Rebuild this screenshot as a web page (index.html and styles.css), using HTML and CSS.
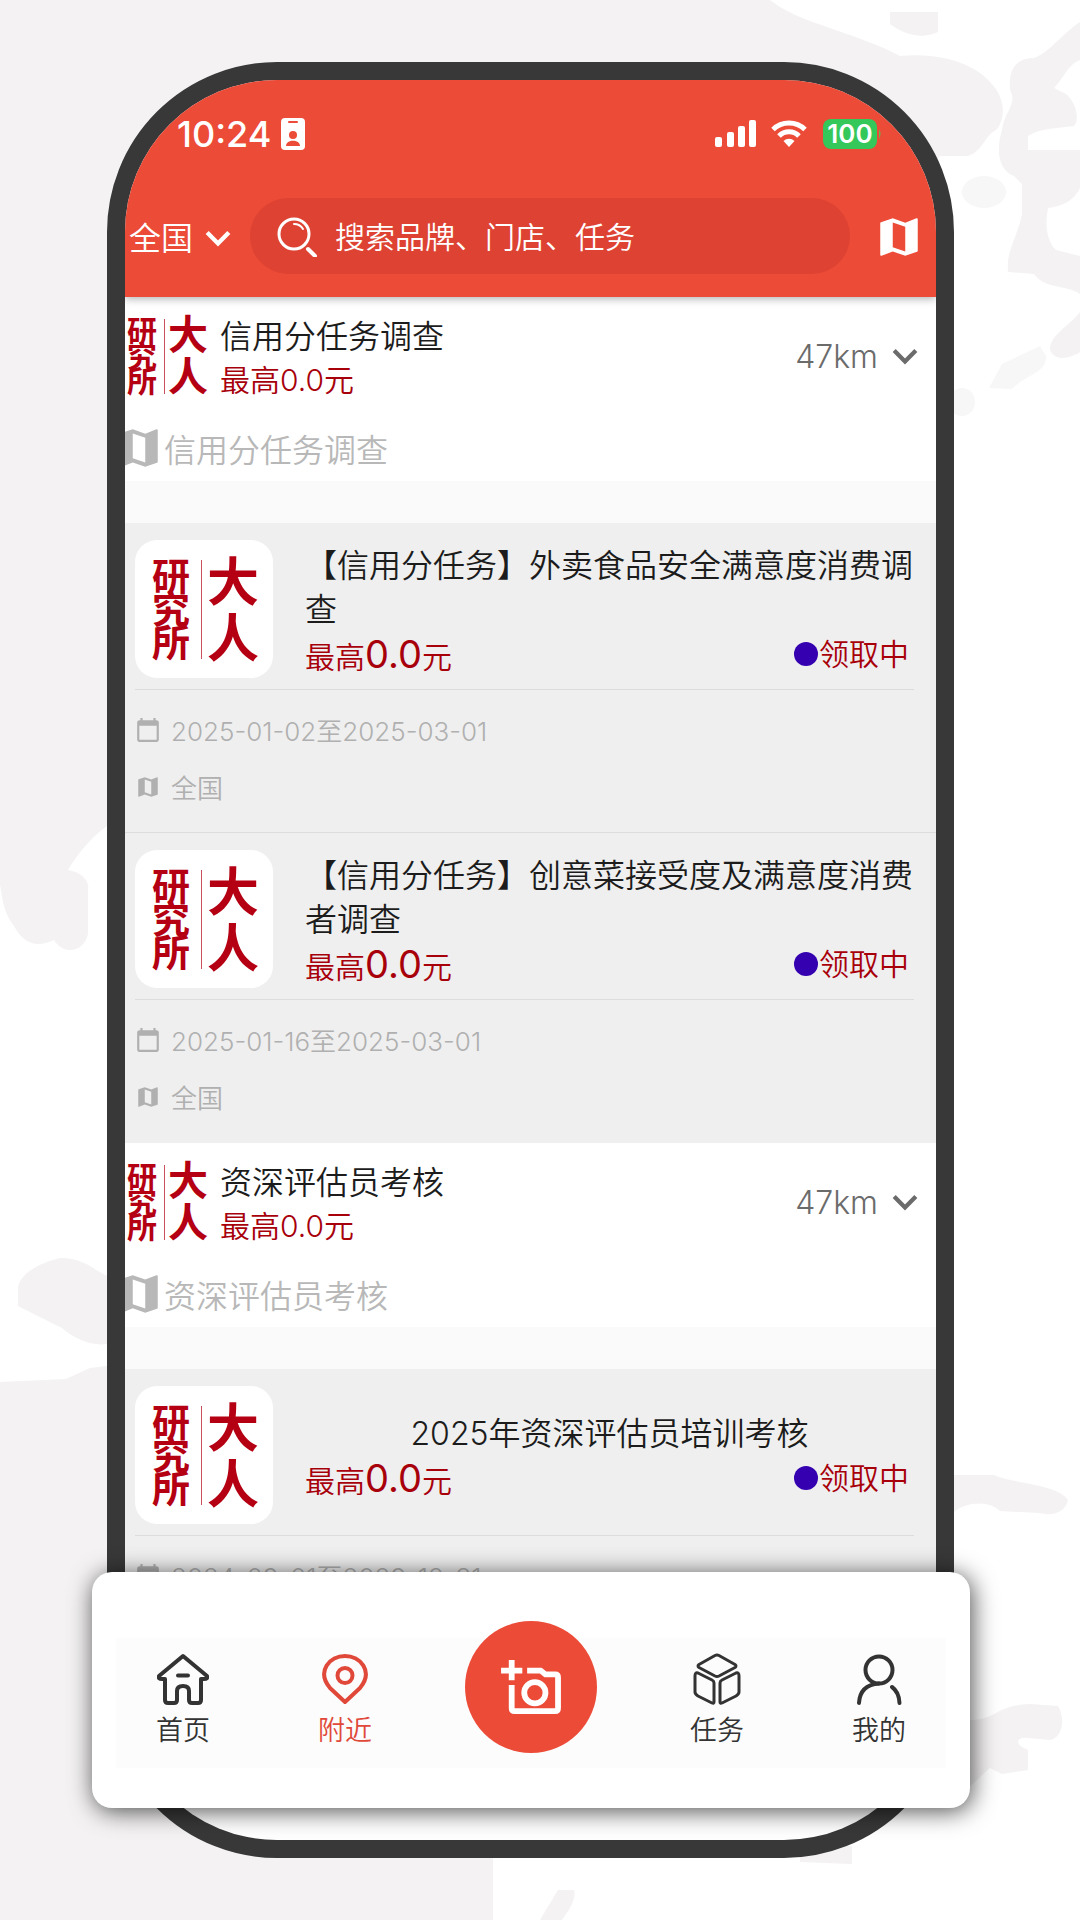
FILE: index.html
```
<!DOCTYPE html>
<html lang="zh-CN">

<head>
    <meta charset="UTF-8">
    <meta name="viewport" content="width=device-width, initial-scale=1.0">
    <title>附近任务</title>
    <link rel="stylesheet" href="styles.css">
</head>

<body>
<!-- shared icons -->
<svg class="sprite" aria-hidden="true">
    <symbol id="icon-map" viewBox="0 0 24 24">
        <path fill="currentColor" d="M20.500 3l-.16.030L15 5.100 9 3 3.360 4.900c-.210.070-.360.250-.360.480V20.500c0 .280.220.500.500.500l.160-.030L9 18.900l6 2.100 5.640-1.900c.210-.070.360-.250.360-.480V3.500c0-.280-.220-.500-.500-.500zM15 19l-6-2.110V5l6 2.110V19z"/>
    </symbol>
    <symbol id="icon-calendar" viewBox="0 0 24 24">
        <path fill="currentColor" d="M20 3h-1V1h-2v2H7V1H5v2H4c-1.100 0-2 .900-2 2v16c0 1.100.900 2 2 2h16c1.100 0 2-.900 2-2V5c0-1.100-.900-2-2-2zm0 18H4V8h16v13z"/>
    </symbol>
    <symbol id="icon-down" viewBox="0 0 24 24">
        <path fill="none" stroke="currentColor" stroke-width="4" d="M2 7l10 10L22 7"/>
    </symbol>
</svg>

<div class="stage">
    <svg class="backdrop" viewBox="0 0 1080 1920" preserveAspectRatio="none" aria-hidden="true">
        <path d="M0 0H770C800 24 850 30 900 56C940 52 975 64 990 82C1008 100 1004 122 996 130C984 136 984 150 968 156H940L600 600H107V826C92 836 76 856 68 870C80 872 90 880 88 890V934C84 952 64 956 54 940C36 948 24 944 14 926C4 914 2 898 0 884Z"/>
        <path d="M890 12H938V32C920 40 904 34 890 24Z"/>
        <path d="M1080 22C1062 34 1050 52 1034 58C1016 58 1008 70 1010 90C1018 104 1004 112 1002 130C996 150 998 170 1014 176L1022 184V214C1018 236 1006 250 1008 272L1034 274C1046 290 1066 284 1080 294V256L1056 250C1044 238 1046 218 1048 208C1064 206 1074 200 1080 188V150H1028V136C1040 128 1060 128 1074 126C1080 120 1076 102 1066 94L1054 88C1064 78 1068 64 1080 60Z"/>
        <path d="M1080 312C1070 326 1050 334 1050 350C1056 364 1074 356 1080 352Z"/>
        <g class="faint">
            <path d="M1040 346L1002 364L989 388L1012 389C1024 376 1048 372 1046 356Z"/>
            <ellipse cx="984" cy="192" rx="22" ry="16"/>
            <ellipse cx="962" cy="402" rx="13" ry="14"/>
        </g>
        <path d="M18 1290C18 1272 44 1262 60 1258C84 1258 94 1270 107 1276V1344C92 1346 76 1340 62 1328L18 1306Z"/>
        <path d="M0 1382L66 1379L90 1368L140 1362L493 1858V1920H0Z"/>
        <path d="M954 1475H994C1014 1484 1058 1484 1068 1500C1066 1514 1048 1516 1040 1513L1000 1511C988 1500 966 1502 954 1512Z"/>
        <path d="M960 1720C1000 1722 990 1706 1030 1704L1058 1706C1066 1720 1062 1738 1050 1740L1028 1738C1018 1736 1012 1744 1028 1750V1770L1002 1774L990 1768C976 1780 970 1790 960 1790Z"/>
        <path d="M800 1846H852V1864L800 1862Z"/>
        <path d="M558 1890H574C576 1896 572 1906 566 1914L562 1920H540Z"/>
    </svg>

    <div class="phone">
        <div class="screen">
            <header class="top">
                <div class="status">
                    <span class="clock">10:24</span>
                    <svg class="badge" viewBox="0 0 24 32" aria-hidden="true">
                        <rect width="24" height="32" rx="4" fill="#fff"/>
                        <rect x="7" y="3" width="10" height="2" rx="1" fill="#ec4b37"/>
                        <circle cx="12" cy="17" r="4" fill="#ec4b37"/>
                        <path d="M5 28c0-7 14-7 14 0z" fill="#ec4b37"/>
                    </svg>
                    <svg class="signal" viewBox="0 0 42 28" aria-hidden="true">
                        <g fill="#fff">
                            <rect x="0" y="17" width="7" height="10" rx="2"/>
                            <rect x="12" y="12" width="7" height="15" rx="2"/>
                            <rect x="23" y="6" width="7" height="21" rx="2"/>
                            <rect x="34" y="0" width="7" height="27" rx="2"/>
                        </g>
                    </svg>
                    <svg class="wifi" viewBox="0 0 36 28" aria-hidden="true">
                        <g fill="none" stroke="#fff" stroke-width="5">
                            <path d="M2 9.500a23 23 0 0 1 32 0"/>
                            <path d="M8 16a14 14 0 0 1 20 0"/>
                        </g>
                        <path fill="#fff" d="M18 27l-5.500-6a8 8 0 0 1 11 0z"/>
                    </svg>
                    <span class="battery">100</span>
                    <svg class="battery-tip" viewBox="0 0 5 12" aria-hidden="true"><path fill="#6fae4a" d="M2 1q3 5 0 10z"/></svg>
                </div>
                <form class="search-row" role="search">
                    <label class="city">
                        <select class="city-select" aria-label="地区">
                            <option>全国</option>
                        </select>
                        <svg class="icon-small"><use href="#icon-down"/></svg>
                    </label>
                    <label class="search">
                        <svg class="icon-search" viewBox="0 0 40 40" fill="none" stroke="#fff" stroke-linecap="round" aria-hidden="true">
                            <circle cx="17" cy="17" r="15" stroke-width="3"/>
                            <path d="M17 7q6 0 9 5" stroke-width="2"/>
                            <path d="M31 32l7 7" stroke-width="4"/>
                        </svg>
                        <input class="search-input" type="search" placeholder="搜索品牌、门店、任务" aria-label="搜索">
                    </label>
                    <button class="map-btn" type="button" aria-label="地图">
                        <svg class="icon-large"><use href="#icon-map"/></svg>
                    </button>
                </form>
            </header>

            <main>
                <section class="group">
                    <div class="group-head">
                        <div class="logo logo-small"><span class="logo-left">研究所</span><span class="logo-right">大人</span></div>
                        <div class="group-text">
                            <h2 class="title">信用分任务调查</h2>
                            <p class="price">最高0.0元</p>
                        </div>
                        <button class="distance" type="button">47km <svg class="icon-small"><use href="#icon-down"/></svg></button>
                    </div>
                    <p class="address"><svg class="icon-large"><use href="#icon-map"/></svg>信用分任务调查</p>
                    <ul class="tasks">
                        <li class="task">
                            <div class="task-main">
                                <div class="logo logo-card"><span class="logo-left">研究所</span><span class="logo-right">大人</span></div>
                                <div class="task-text">
                                    <h3 class="title">【信用分任务】外卖食品安全满意度消费调查</h3>
                                    <div class="task-row">
                                        <p class="price">最高<span class="amount">0.0</span>元</p>
                                        <p class="state">领取中</p>
                                    </div>
                                </div>
                            </div>
                            <p class="meta"><svg class="icon-meta"><use href="#icon-calendar"/></svg>2025-01-02至2025-03-01</p>
                            <p class="meta"><svg class="icon-meta"><use href="#icon-map"/></svg>全国</p>
                        </li>
                        <li class="task">
                            <div class="task-main">
                                <div class="logo logo-card"><span class="logo-left">研究所</span><span class="logo-right">大人</span></div>
                                <div class="task-text">
                                    <h3 class="title">【信用分任务】创意菜接受度及满意度消费者调查</h3>
                                    <div class="task-row">
                                        <p class="price">最高<span class="amount">0.0</span>元</p>
                                        <p class="state">领取中</p>
                                    </div>
                                </div>
                            </div>
                            <p class="meta"><svg class="icon-meta"><use href="#icon-calendar"/></svg>2025-01-16至2025-03-01</p>
                            <p class="meta"><svg class="icon-meta"><use href="#icon-map"/></svg>全国</p>
                        </li>
                    </ul>
                </section>

                <section class="group">
                    <div class="group-head">
                        <div class="logo logo-small"><span class="logo-left">研究所</span><span class="logo-right">大人</span></div>
                        <div class="group-text">
                            <h2 class="title">资深评估员考核</h2>
                            <p class="price">最高0.0元</p>
                        </div>
                        <button class="distance" type="button">47km <svg class="icon-small"><use href="#icon-down"/></svg></button>
                    </div>
                    <p class="address"><svg class="icon-large"><use href="#icon-map"/></svg>资深评估员考核</p>
                    <ul class="tasks">
                        <li class="task">
                            <div class="task-main">
                                <div class="logo logo-card"><span class="logo-left">研究所</span><span class="logo-right">大人</span></div>
                                <div class="task-text">
                                    <h3 class="title">2025年资深评估员培训考核</h3>
                                    <div class="task-row">
                                        <p class="price">最高<span class="amount">0.0</span>元</p>
                                        <p class="state">领取中</p>
                                    </div>
                                </div>
                            </div>
                            <p class="meta"><svg class="icon-meta"><use href="#icon-calendar"/></svg>2024-09-01至2029-12-31</p>
                        </li>
                    </ul>
                </section>
            </main>
        </div>

        <nav class="tabbar">
            <a class="tab" href="#home">
                <svg class="tab-icon" viewBox="0 0 52 52" aria-hidden="true">
                    <path d="M26 3L2 23q-1 3 3 3h3v21q0 3 3 3h6q3 0 3-3V38q0-5 6-5t6 5v9q0 3 3 3h6q3 0 3-3V26h3q4 0 3-3zM21 22.500h10"/>
                </svg>
                首页
            </a>
            <a class="tab tab-active" href="#nearby">
                <svg class="tab-icon" viewBox="0 0 52 52" aria-hidden="true">
                    <path d="M26 49L11 35C-3 18 11 3 26 3s29 15 15 32z"/>
                    <circle cx="26" cy="22.500" r="7.500"/>
                </svg>
                附近
            </a>
            <button class="shoot" type="button" aria-label="拍照">
                <svg class="shoot-icon" viewBox="0 0 62 58" fill="none" stroke="#fff" stroke-width="6" aria-hidden="true">
                    <path d="M0 12h22M11 1v21M11 27v24q0 3 3 3h42q3 0 3-3V19q0-3-3-3H46l-5-4H27"/>
                    <circle cx="35" cy="35" r="11"/>
                </svg>
            </button>
            <a class="tab" href="#tasks">
                <svg class="tab-icon tab-icon-thin" viewBox="0 0 52 52" aria-hidden="true">
                    <path d="M24 2.500q2-1 4 0l16 9q2 1.500 0 3L28 23q-2 1-4 0L8 14.500q-2-1.500 0-3zM4 23q0-4 3-3l14 7q2 1 2 3v19q0 2-2 1L7 43q-3-2-3-4zM48 23q0-4-3-3l-14 7q-2 1-2 3v19q0 2 2 1l14-7q3-2 3-4z"/>
                </svg>
                任务
            </a>
            <a class="tab" href="#mine">
                <svg class="tab-icon" viewBox="0 0 52 52" aria-hidden="true">
                    <circle cx="26" cy="17" r="13.500"/>
                    <path d="M6 50q1-18 20-19.500M39 34q7 5 7.500 16"/>
                </svg>
                我的
            </a>
        </nav>
    </div>
</div>
</body>

</html>
```
FILE: styles.css
```
* {
    box-sizing: border-box;
    margin: 0;
    padding: 0;
}

body {
    font-family: Inter, "Noto Sans CJK SC", sans-serif;
    font-weight: 350;
    background: #fff;
    color: #1c1c1c;
}

button,
input,
select {
    font: inherit;
    color: inherit;
    border: none;
    background: none;
}

ul {
    list-style: none;
}

.sprite {
    display: none;
}

.stage {
    position: relative;
    display: flex;
    min-height: 100vh;
    padding: 62px 126px 62px 107px;
}

.backdrop {
    position: absolute;
    top: 0;
    left: 0;
    width: 100%;
    height: 100%;
    fill: #f4f2f3;
}

.faint {
    fill: #f8f7f8;
}

.phone {
    position: relative;
    flex: 1;
    display: flex;
    border: 18px solid #383839;
    border-radius: 170px;
    background: #383839;
}

.screen {
    flex: 1;
    min-width: 0;
    overflow: hidden;
    border-radius: 152px;
    background: #fff;
}

/* header */
.top {
    position: relative;
    background: #ec4b37;
    color: #fff;
    box-shadow: 0 2px 8px rgba(0, 0, 0, 0.3);
}

.status {
    display: flex;
    align-items: center;
    height: 108px;
    padding: 0 54px 0 52px;
}

.clock {
    margin-right: 10px;
    font-size: 36px;
    font-weight: 550;
}

.badge {
    width: 24px;
    height: 32px;
    margin-right: auto;
}

.signal {
    width: 42px;
    height: 28px;
}

.wifi {
    width: 36px;
    height: 28px;
    margin: 0 16px 0 14px;
}

.battery {
    width: 54px;
    border-radius: 8px;
    background: #34c759;
    font-size: 26px;
    font-weight: 600;
    line-height: 30px;
    text-align: center;
}

.battery-tip {
    width: 5px;
    height: 12px;
}

.search-row {
    display: flex;
    align-items: center;
    padding: 10px 12px 23px 4px;
}

.city {
    display: flex;
    align-items: center;
    gap: 12px;
    padding-top: 4px;
    font-size: 32px;
}

.city-select {
    width: 64px;
    appearance: none;
}

.icon-small {
    width: 26px;
    height: 26px;
}

.search {
    flex: 1;
    display: flex;
    align-items: center;
    gap: 18px;
    height: 76px;
    margin: 0 24px 0 19px;
    padding: 2px 27px 0;
    border-radius: 38px;
    background: #dd4233;
}

.icon-search {
    width: 40px;
    height: 40px;
}

.search-input {
    flex: 1;
    min-width: 0;
    font-size: 30px;
    outline: none;
    appearance: none;
}

.search-input::placeholder {
    color: #fff;
}

.icon-large {
    width: 50px;
    height: 50px;
}

.map-btn {
    display: flex;
    padding-top: 2px;
}

/* groups */
.group-head {
    display: flex;
    align-items: center;
    height: 118px;
    padding-right: 18px;
}

.group-text {
    flex: 1;
    padding: 4px 0 0 12px;
}

.title {
    font-size: 32px;
    font-weight: 350;
    line-height: 44px;
}

.price {
    color: #a8000b;
    font-size: 30px;
    line-height: 42px;
}

.distance {
    display: flex;
    align-items: center;
    gap: 14px;
    color: #6b6b6b;
    font-size: 32px;
}

.address {
    display: flex;
    align-items: center;
    height: 66px;
    margin-left: -11px;
    padding-bottom: 1px;
    color: #b8b8b8;
    font-size: 32px;
}

.logo {
    display: flex;
    align-items: center;
    color: #b40012;
    font-weight: 700;
}

.logo-left {
    border-right: 1px solid #c9505c;
}

.logo-left,
.logo-right {
    word-break: break-all;
}

.logo-small {
    width: 83px;
}

.logo-small .logo-left {
    width: 40px;
    padding-left: 2px;
    font-size: 30px;
    line-height: 25px;
}

.logo-small .logo-right {
    width: 40px;
    margin-left: 3px;
    font-size: 40px;
    line-height: 42px;
}

.logo-card {
    width: 138px;
    height: 138px;
    padding-left: 14px;
    border-radius: 22px;
    background: #fff;
}

.logo-card .logo-left {
    width: 53px;
    padding-left: 3px;
    font-size: 38px;
    line-height: 33px;
}

.logo-card .logo-right {
    width: 52px;
    margin-left: 5px;
    padding-top: 4px;
    font-size: 52px;
    line-height: 56px;
}

/* tasks */
.tasks {
    border-top: 42px solid #fafafa;
}

.task {
    padding: 17px 22px 17px 10px;
    background: #efefef;
    border-bottom: 1px solid #dcdcdc;
}

.task:last-child {
    border-bottom-color: transparent;
}

.task-main {
    display: flex;
    align-items: center;
    gap: 32px;
    margin-bottom: 11px;
    padding-bottom: 11px;
    border-bottom: 1px solid #dcdcdc;
}

.task-text {
    flex: 1;
    display: flex;
    flex-direction: column;
    align-items: center;
    padding-top: 2px;
}

.task-row {
    align-self: stretch;
    display: flex;
    justify-content: space-between;
    height: 44px;
    padding-right: 5px;
}

.task-row .price,
.state {
    line-height: 44px;
}

.amount {
    font-size: 38px;
    font-weight: 400;
}

.state {
    display: flex;
    align-items: center;
    gap: 1px;
    color: #a8000b;
    font-size: 30px;
}

.state::before {
    content: "";
    width: 24px;
    height: 24px;
    border-radius: 50%;
    background: #3400b0;
}

.meta {
    display: flex;
    align-items: center;
    gap: 10px;
    height: 57px;
    color: #b0b0b0;
    font-size: 26px;
}

.icon-meta {
    width: 26px;
    height: 26px;
}

/* floating tab bar */
.tabbar {
    position: absolute;
    left: -33px;
    right: -34px;
    bottom: 32px;
    display: grid;
    grid-template-columns: 1fr 1fr 210px 1fr 1fr;
    align-items: center;
    justify-items: center;
    height: 236px;
    padding: 0 10px;
    border-radius: 20px;
    background: linear-gradient(#fcfcfc, #fcfcfc) 50% 66px / calc(100% - 48px) 130px no-repeat #fff;
    box-shadow: 2px 3px 24px rgba(0, 0, 0, 0.7);
}

.tab {
    display: flex;
    flex-direction: column;
    align-items: center;
    gap: 6px;
    padding-top: 24px;
    color: #333;
    font-size: 27px;
    line-height: 40px;
    text-decoration: none;
}

.tab-active {
    color: #e0493a;
}

.tab-icon {
    width: 52px;
    height: 52px;
    fill: none;
    stroke: currentColor;
    stroke-width: 4;
    stroke-linecap: round;
    stroke-linejoin: round;
}

.tab-icon-thin {
    stroke-width: 3;
}

.shoot {
    display: flex;
    align-items: center;
    justify-content: center;
    width: 132px;
    height: 132px;
    margin-bottom: 6px;
    border-radius: 50%;
    background: #ec4b37;
}

.shoot-icon {
    width: 60px;
    height: 56px;
}
```
